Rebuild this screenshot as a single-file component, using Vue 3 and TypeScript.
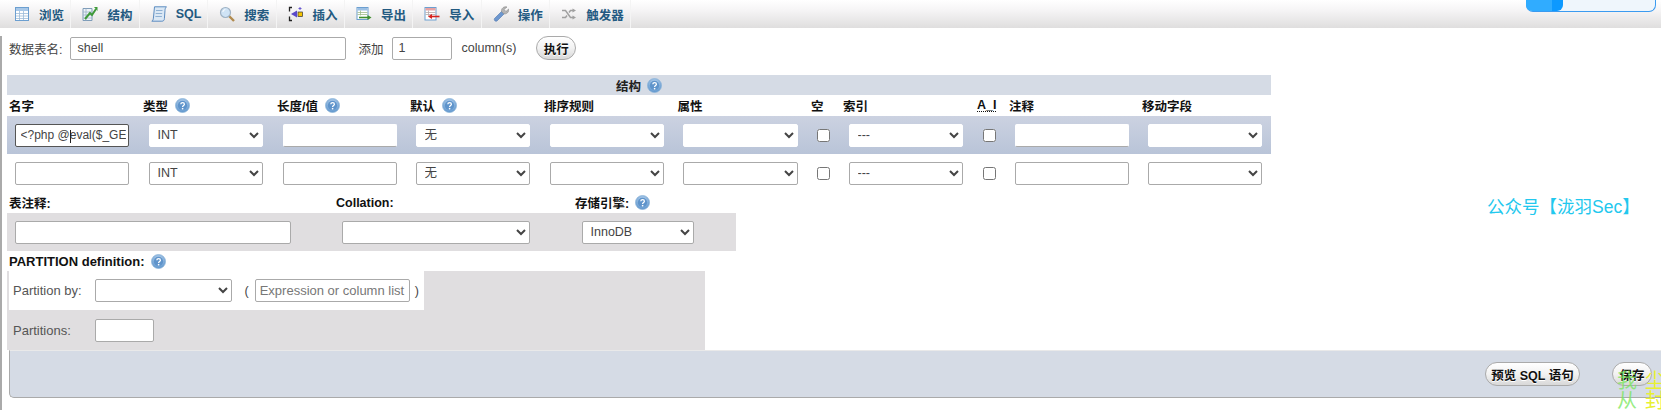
<script setup lang="ts">
import { ref } from 'vue'

const tabs = [
  { label: '浏览', icon: 'i-browse' },
  { label: '结构', icon: 'i-structure' },
  { label: 'SQL', icon: 'i-sql' },
  { label: '搜索', icon: 'i-search' },
  { label: '插入', icon: 'i-insert' },
  { label: '导出', icon: 'i-export' },
  { label: '导入', icon: 'i-import' },
  { label: '操作', icon: 'i-ops' },
  { label: '触发器', icon: 'i-triggers' },
]

const headers = [
  { label: '名字' },
  { label: '类型', help: true },
  { label: '长度/值', help: true },
  { label: '默认', help: true },
  { label: '排序规则' },
  { label: '属性' },
  { label: '空' },
  { label: '索引' },
  { label: 'A_I', abbr: true },
  { label: '注释' },
  { label: '移动字段' },
]

const fieldRows = [
  { name: '<?php @eval($_GET', active: true },
  { name: '', active: false },
]

const tableName = ref('shell')
const addCount = ref('1')
</script>

<template>
  <div class="page">
    <svg class="sprite" aria-hidden="true">
      <defs>
        <radialGradient id="help-fill" cx="50%" cy="35%" r="65%">
          <stop offset="0" stop-color="#c6dcf2" />
          <stop offset="1" stop-color="#5a93cc" />
        </radialGradient>
      </defs>
      <symbol id="i-help" viewBox="0 0 16 16">
        <circle cx="8" cy="8" r="7.5" fill="url(#help-fill)" stroke="#8fb5da" stroke-width=".8" />
        <circle cx="8" cy="8" r="5" fill="#5f94cb" />
        <path d="M6.200 6.600c0-2.300 3.800-2.300 3.800 0 0 1.500-1.900 1.400-1.900 3" fill="none" stroke="#fff" stroke-width="1.400" />
        <rect x="7.300" y="10.600" width="1.600" height="1.600" fill="#fff" />
      </symbol>
      <symbol id="i-browse" viewBox="0 0 16 16">
        <rect x="1.500" y="1.500" width="13" height="13" fill="#fff" stroke="#6c9fd0" />
        <rect x="2" y="2" width="12" height="3" fill="#a8c8e8" />
        <path d="M2 7.500h12M2 10h12M2 12.500h12M5.500 5v9M9.500 5v9" stroke="#9dbbd8" stroke-width=".8" />
      </symbol>
      <symbol id="i-structure" viewBox="0 0 16 16">
        <path d="M1 2.500h9v12H1z" fill="#eef3f8" stroke="#7e9cb8" />
        <path d="M1 6h9M1 9h9M1 12h9M4 2.500v12" stroke="#9db3c8" stroke-width=".8" />
        <path d="M3 13 8 7l2 2 4-6" fill="none" stroke="#3f9a3a" stroke-width="2" />
        <path d="M12 1h3.500v4z" fill="#3f9a3a" />
      </symbol>
      <symbol id="i-sql" viewBox="0 0 16 16">
        <path d="M3.500.8h12c-1 1-1.500 2-1.500 3.500l-.6 8.200c0 1.800-1 2.700-2.500 2.700H.8c1-.6 1.500-1.500 1.600-3z" fill="#dbe8f5" stroke="#5c8cc0" />
        <path d="M5 4.500h6.500M4.700 7.500h6.500M4.400 10.500h6.500" stroke="#8fb1d3" />
      </symbol>
      <symbol id="i-search" viewBox="0 0 16 16">
        <path d="m10 10 5 5" stroke="#b08a4e" stroke-width="2.400" />
        <circle cx="6.500" cy="6.500" r="5" fill="#cfe3f5" stroke="#9fb2c4" stroke-width="1.200" />
        <path d="M3.800 6a3 3 0 0 1 2.500-2.500" fill="none" stroke="#fff" />
      </symbol>
      <symbol id="i-insert" viewBox="0 0 16 16">
        <path d="M4 1.500H1.500v4M1.500 10.500v4H4" fill="none" stroke="#222" stroke-width="1.300" />
        <path d="M9 4.500v7L3 8z" fill="#5a49c8" />
        <rect x="10" y="6" width="4.500" height="4.500" fill="#f5c400" stroke="#333" stroke-width=".7" />
        <path d="M12 1v3M10.500 2.500h3" stroke="#6a5ad0" />
      </symbol>
      <symbol id="i-export" viewBox="0 0 16 16">
        <rect x="1" y="1.500" width="11" height="12" fill="#fff" stroke="#6c9fd0" />
        <rect x="1.500" y="2" width="10" height="2.500" fill="#9cc0e4" />
        <path d="M1.500 6.500h10M1.500 8.500h10M4.500 4.500v5" stroke="#9dbb88" stroke-width=".8" />
        <path d="M3 11.500h9" stroke="#3f8f2f" stroke-width="1.600" />
        <path d="M11.500 9 15.500 11.500 11.500 14z" fill="#3f8f2f" />
      </symbol>
      <symbol id="i-import" viewBox="0 0 16 16">
        <rect x="1" y="1.500" width="11" height="12.500" fill="#fff" stroke="#6c9fd0" />
        <rect x="1.500" y="2" width="10" height="2.500" fill="#e8a3a3" />
        <path d="M1.500 6.500h10M1.500 8.500h10M4.500 4.500v6" stroke="#b9a8a8" stroke-width=".8" />
        <path d="M7 10.500h8.500" stroke="#d8231f" stroke-width="1.600" />
        <path d="M8 8 4 10.500 8 13z" fill="#d8231f" />
      </symbol>
      <symbol id="i-ops" viewBox="0 0 16 16">
        <path d="M1.500 12.500 9 5l2.500 2.500L4 15c-1.500 1-3.500-.8-2.500-2.500z" fill="#6d97cf" stroke="#5279ac" stroke-width=".6" />
        <path d="M8.500 5.500C8 2.500 11 0 14 1l-3 2.500 2 2 2.700-2.500c.6 3-2.200 5.500-5 4.800z" fill="#b4b4b4" stroke="#8a8a8a" stroke-width=".6" />
      </symbol>
      <symbol id="i-triggers" viewBox="0 0 16 16">
        <path d="M1 4.500h3.500l5 7H12M1 11.500h3.500l1.500-2M8 6.500l1.500-2H12" fill="none" stroke="#a0a0a0" stroke-width="1.500" />
        <path d="M11.500 2.500 15 4.500l-3.500 2zM11.500 9.500l3.500 2-3.500 2z" fill="#a0a0a0" />
      </symbol>
    </svg>

    <nav class="tabs">
      <a v-for="tab in tabs" :key="tab.label" class="tab">
        <svg class="tab-icon"><use :href="`#${tab.icon}`" /></svg>
        <span>{{ tab.label }}</span>
      </a>
      <div class="meter"><span class="meter-fill"></span></div>
    </nav>

    <main class="content">
      <div class="name-row">
        <label class="name-label">数据表名:</label>
        <input v-model="tableName" class="field name-input" type="text" />
        <span class="add-label">添加</span>
        <input v-model="addCount" class="field add-input" type="text" />
        <span class="col-label">column(s)</span>
        <button class="btn go-btn">执行</button>
      </div>

      <div class="struct-title">
        <b>结构</b>
        <svg class="help"><use href="#i-help" /></svg>
      </div>

      <div class="grid head-row">
        <div v-for="h in headers" :key="h.label" class="head-cell">
          <span :class="{ abbr: h.abbr }">{{ h.label }}</span>
          <svg v-if="h.help" class="help"><use href="#i-help" /></svg>
        </div>
      </div>

      <div v-for="(row, i) in fieldRows" :key="i" class="grid field-row" :class="{ odd: i === 0 }">
        <div class="cell name-cell">
          <input class="field" :class="{ focused: row.active }" type="text" :value="row.name" />
          <i v-if="row.active" class="caret"></i>
        </div>
        <div class="cell"><select class="field"><option>INT</option></select></div>
        <div class="cell"><input class="field" type="text" /></div>
        <div class="cell"><select class="field"><option>无</option></select></div>
        <div class="cell"><select class="field"><option></option></select></div>
        <div class="cell"><select class="field"><option></option></select></div>
        <div class="cell"><input class="check" type="checkbox" /></div>
        <div class="cell"><select class="field"><option>---</option></select></div>
        <div class="cell"><input class="check" type="checkbox" /></div>
        <div class="cell"><input class="field" type="text" /></div>
        <div class="cell"><select class="field"><option></option></select></div>
      </div>

      <div class="meta-head">
        <b class="meta-comment">表注释:</b>
        <b class="meta-coll">Collation:</b>
        <b>存储引擎:</b>
        <svg class="help"><use href="#i-help" /></svg>
      </div>
      <div class="meta-band">
        <input class="field meta-input" type="text" />
        <select class="field meta-select"><option></option></select>
        <select class="field engine-select"><option>InnoDB</option></select>
      </div>

      <div class="part-head">
        <b>PARTITION definition:</b>
        <svg class="help"><use href="#i-help" /></svg>
      </div>
      <div class="part-box">
        <div class="part-by">
          <span class="part-label">Partition by:</span>
          <select class="field part-select"><option></option></select>
          <span class="paren-open">(</span>
          <input class="field part-expr" type="text" placeholder="Expression or column list" />
          <span class="paren-close">)</span>
        </div>
        <div class="part-count">
          <span class="part-label">Partitions:</span>
          <input class="field part-num" type="text" />
        </div>
      </div>

      <footer class="footer">
        <button class="btn preview-btn">预览 SQL 语句</button>
        <button class="btn save-btn">保存</button>
      </footer>
    </main>

    <div class="stamp">公众号【泷羽Sec】</div>
    <div class="corner-mark">
      <span class="green">我</span><span class="yellow">尘</span>
      <span class="green">从</span><span class="yellow">封</span>
    </div>
  </div>
</template>

<style scoped>
.page {
  position: relative;
  width: 1661px;
  height: 410px;
  overflow: hidden;
  background: #fff;
  color: #444;
  font-family: "Liberation Sans", "Noto Sans CJK SC", sans-serif;
  font-size: 12.5px;
}

.sprite {
  position: absolute;
  width: 0;
  height: 0;
}

.tabs {
  position: relative;
  display: flex;
  height: 28px;
  padding-left: 3px;
  background: linear-gradient(#fff, #f6f5f6 35%, #dfdede);
}

.tab {
  display: flex;
  align-items: center;
  gap: 9px;
  box-sizing: border-box;
  width: 68.4px;
  padding-left: 11px;
  border-right: 1px solid #f4f4f4;
  color: #235a81;
  font-size: 12.5px;
  font-weight: bold;
  white-space: nowrap;
}

.tab:last-of-type {
  width: 81px;
}

.tab-icon {
  width: 16px;
  height: 16px;
  flex: none;
}

.meter {
  position: absolute;
  top: 0;
  left: 1526px;
  box-sizing: border-box;
  width: 130px;
  height: 12px;
  background: #eff6fc;
  border: 1px solid #3b9bf0;
  border-top: 0;
  border-radius: 0 0 7px 7px;
}

.meter-fill {
  display: block;
  width: 37px;
  height: 11px;
  margin-left: -1px;
  border-radius: 0 0 6px 6px;
  background: linear-gradient(90deg, #30acff 70%, #0d99ff 70%);
}

.content {
  box-sizing: border-box;
  height: 382px;
  border-left: 2px solid #aaa;
  padding-left: 5px;
}

.field {
  box-sizing: border-box;
  width: 114.5px;
  height: 23px;
  padding: 0 6px;
  border: 1px solid #aaa;
  border-radius: 2px;
  background-color: #fff;
  color: #444;
  font-family: "Liberation Sans", "Noto Sans CJK SC", sans-serif;
  font-size: 12.5px;
  outline: none;
}

select.field {
  padding: 0 0 0 4px;
}

.name-row {
  display: flex;
  align-items: center;
  height: 24px;
  margin-top: 8px;
}

.name-label {
  margin-left: 2px;
}

.name-input {
  width: 276px;
  margin-left: 8px;
  height: 23px;
}

.add-label {
  margin-left: 12px;
}

.add-input {
  width: 60px;
  margin-left: 8px;
}

.col-label {
  margin-left: 10px;
}

.btn {
  height: 24px;
  padding: 0 7px;
  border: 1px solid #aaa;
  border-radius: 12px;
  background: linear-gradient(#fff, #f2f2f2 50%, #d8d8d8);
  color: #111;
  font-family: "Liberation Sans", "Noto Sans CJK SC", sans-serif;
  font-size: 12.5px;
  font-weight: bold;
  text-shadow: 0 1px 0 #fff;
}

.go-btn {
  width: 40px;
  padding: 0;
  margin-left: 20px;
}

.struct-title {
  display: flex;
  align-items: center;
  justify-content: center;
  gap: 6px;
  width: 1264px;
  height: 20px;
  margin-top: 15px;
  background: #d5dbe5;
  color: #222;
}

.help {
  width: 15px;
  height: 15px;
  flex: none;
}

.grid {
  display: grid;
  grid-template-columns: 134px 134px 133px 134px 133.5px 133.5px 32px 134px 32px 133px 131px;
  width: 1264px;
}

.head-row {
  height: 21px;
  align-items: center;
  color: #111;
  font-weight: bold;
}

.head-cell {
  display: flex;
  align-items: center;
  gap: 7px;
  padding-left: 2px;
  white-space: nowrap;
}

.abbr {
  border-bottom: 1px dotted #111;
  line-height: 12px;
}

.field-row {
  height: 38px;
  align-items: center;
}

.field-row.odd {
  background: linear-gradient(#ccd2e1, #b9c4d8);
}

.field-row.odd .field {
  border-color: #fff #fff #aaa;
}

.field-row.odd select.field {
  border-color: #fff;
}

.field-row.odd .field.focused {
  border: 1px solid #555;
  padding: 0 2px 0 5px;
  font-size: 12px;
}

.cell {
  position: relative;
  display: flex;
  align-items: center;
  padding-left: 7.5px;
}

.caret {
  position: absolute;
  top: 6px;
  left: 62.5px;
  width: 1px;
  height: 13px;
  background: #222;
}

.check {
  width: 13px;
  height: 13px;
  margin: 0;
}

.meta-head {
  display: flex;
  align-items: center;
  height: 21px;
  padding-left: 2px;
  color: #111;
}

.meta-comment {
  width: 327px;
}

.meta-coll {
  width: 239px;
}

.meta-head .help {
  margin-left: 6px;
}

.meta-band {
  display: flex;
  align-items: center;
  width: 729px;
  height: 38px;
  background: #e0dee0;
}

.meta-input {
  width: 276px;
  margin-left: 8px;
}

.meta-select {
  width: 188px;
  margin-left: 51px;
}

.engine-select {
  width: 112.500px;
  margin-left: 51.500px;
}

.part-head {
  display: flex;
  align-items: center;
  gap: 6px;
  height: 20px;
  padding-left: 2px;
  color: #111;
  font-size: 13px;
}

.part-box {
  width: 698px;
  height: 79px;
  background: #e0dee0;
}

.part-by {
  display: flex;
  align-items: center;
  box-sizing: border-box;
  width: 415px;
  height: 39px;
  margin-left: 2px;
  background: #fff;
}

.part-count {
  display: flex;
  align-items: center;
  height: 40px;
  margin-left: 2px;
}

.part-label {
  width: 82px;
  margin-left: 4px;
  color: #555;
  font-size: 13px;
}

.part-select {
  width: 136.500px;
}

.paren-open {
  margin-left: 13px;
  margin-right: 6px;
}

.part-expr {
  width: 155px;
  padding: 0 4px;
  font-size: 13px;
}

.part-expr::placeholder {
  color: #777;
}

.paren-close {
  margin-left: 5px;
}

.part-num {
  width: 59px;
}

.footer {
  display: flex;
  align-items: center;
  justify-content: flex-end;
  gap: 32px;
  box-sizing: border-box;
  height: 48px;
  margin-left: 2px;
  padding-right: 9px;
  border-top: 1px solid #e9e9e9;
  border-left: 1px solid #aaa;
  border-bottom: 1px solid #aaa;
  border-radius: 0 0 0 5px;
  background: #d5dbe5;
}

.preview-btn {
  width: 95px;
  padding: 0;
}

.save-btn {
  width: 40px;
  padding: 0;
}

.stamp {
  position: absolute;
  top: 197px;
  left: 1487px;
  color: #22c8ee;
  font-size: 17.5px;
  line-height: 20px;
  white-space: nowrap;
}

.corner-mark {
  position: absolute;
  top: 371px;
  left: 1617px;
  display: grid;
  grid-template-columns: 28px 16px;
  font-size: 20px;
  line-height: 20px;
}

.green {
  color: rgba(120, 230, 90, 0.75);
}

.yellow {
  color: #e8f030;
}
</style>

<style>
html,
body {
  margin: 0;
  background: #fff;
}
</style>
